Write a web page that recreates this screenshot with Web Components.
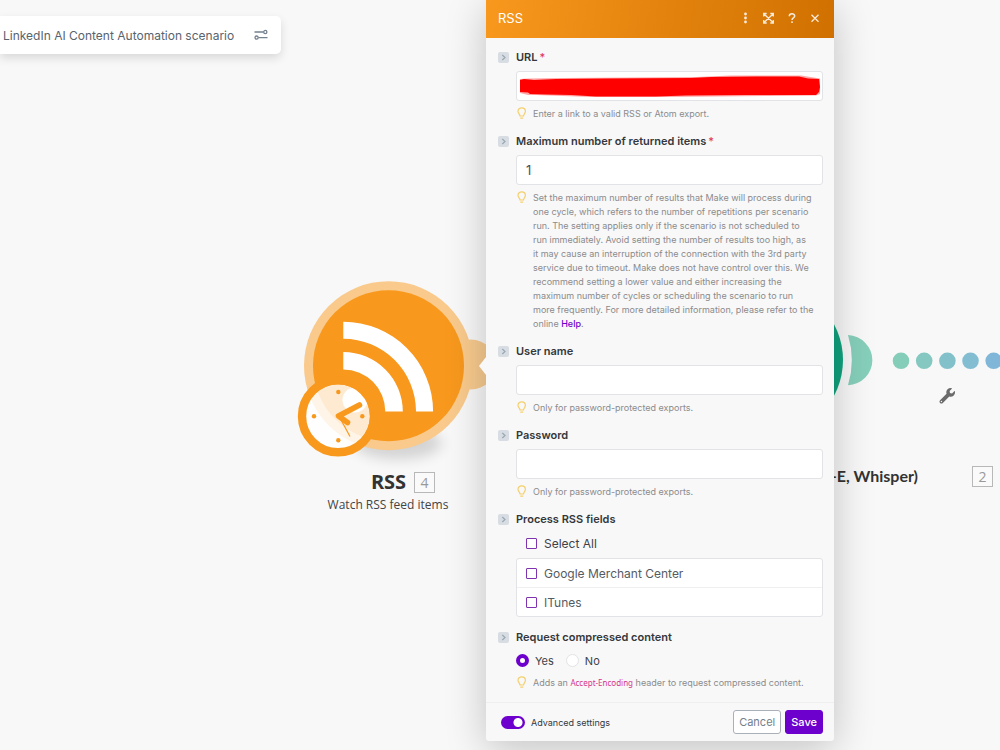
<!DOCTYPE html>
<html lang="en">
<head>
<meta charset="utf-8">
<title>LinkedIn AI Content Automation scenario</title>
<style>
  body {
    margin: 0;
    background: #f8f8f8;
    color: #34373b;
    font-family: Inter, "Liberation Sans", sans-serif;
  }
</style>
</head>
<body>
<scenario-canvas>
  <scenario-title>LinkedIn AI Content Automation scenario</scenario-title>

  <scenario-module style="left:278px;top:270px" label="RSS" number="4" text="Watch RSS feed items">
    <rss-icon></rss-icon>
  </scenario-module>
  <scenario-route style="left:680px;top:270px"></scenario-route>
  <module-caption style="right:82px;top:464px" narrow>-E, Whisper)</module-caption>
  <module-number style="left:972px;top:466px">2</module-number>

  <settings-panel style="left:486px;top:0" heading="RSS">
    <form-field label="URL" type="url" required>
      <redaction-mark slot="over"></redaction-mark>
      <span slot="hint">Enter a link to a valid RSS or Atom export.</span>
    </form-field>
    <form-field label="Maximum number of returned items" type="text" value="1" required>
      <span slot="hint">Set the maximum number of results that Make will process during<br>
        one cycle, which refers to the number of repetitions per scenario<br>
        run. The setting applies only if the scenario is not scheduled to<br>
        run immediately. Avoid setting the number of results too high, as<br>
        it may cause an interruption of the connection with the 3rd party<br>
        service due to timeout. Make does not have control over this. We<br>
        recommend setting a lower value and either increasing the<br>
        maximum number of cycles or scheduling the scenario to run<br>
        more frequently. For more detailed information, please refer to the<br>
        online <hint-link href="#help">Help</hint-link>.</span>
    </form-field>
    <form-field label="User name" type="text">
      <span slot="hint">Only for password-protected exports.</span>
    </form-field>
    <form-field label="Password" type="password">
      <span slot="hint">Only for password-protected exports.</span>
    </form-field>
    <form-field label="Process RSS fields">
      <check-list options="Google Merchant Center,ITunes"></check-list>
    </form-field>
    <form-field label="Request compressed content">
      <yes-no></yes-no>
      <span slot="hint">Adds an <hint-code>Accept-Encoding</hint-code> header to request compressed content.</span>
    </form-field>
    <panel-footer slot="footer"></panel-footer>
  </settings-panel>
</scenario-canvas>

<script>
// attaches an open root and fills it from a template
class Base extends HTMLElement {
  constructor() {
    super();
    this.attachShadow({ mode: 'open' });
  }
  connectedCallback() {
    const template = document.createElement('template');
    template.innerHTML = this.render();
    this.shadowRoot.replaceChildren(template.content.cloneNode(true));
  }
  attr(name) {
    return this.getAttribute(name) || '';
  }
}

class ScenarioCanvas extends Base {
  render() {
    return /*html*/ `
    <style>
    :host{
      display:block;
      position:relative;
      min-height:100vh;
      overflow:hidden;
    }
    </style>
    <slot></slot>`;
  }
}

class ScenarioTitle extends Base {
  render() {
    return /*html*/ `
    <style>
    :host{
      display:flex;
      align-items:center;
      gap:20px;
      width:fit-content;
      height:38px;
      box-sizing:border-box;
      margin-top:16px;
      padding:0 13px 0 3px;
      background:white;
      border-radius:0 5px 5px 0;
      box-shadow:0 4px 10px rgba(0,0,0,.13);
      font-size:12px;
      color:#59636d;
      position:absolute;
      left:0;
    }
    button{
      display:flex;
      padding:0;
      border:none;
      background:none;
    }
    </style>
    <slot></slot>
    <button aria-label="Scenario options">
      <svg width="14" height="12" viewBox="0 0 14 12" fill="none" stroke="#74818f" stroke-width="1.3">
        <path d="M.5 3H9.5M4.5 8.6H13.500"/>
        <circle cx="11.300" cy="3" r="1.600"/>
        <circle cx="2.600" cy="8.600" r="1.600"/>
      </svg>
    </button>`;
  }
}

class RssIcon extends Base {
  render() {
    return /*html*/ `
    <style>
    :host{display:block}
    svg{display:block}
    </style>
    <svg width="220" height="200" viewBox="278 270 220 200">
      <defs>
        <filter id="soft" x="-30%" y="-80%" width="160%" height="260%"><feGaussianBlur stdDeviation="7"/></filter>
      </defs>
      <ellipse cx="398" cy="443" rx="44" ry="16" fill="#000" opacity=".15" filter="url(#soft)"/>
      <circle cx="471" cy="364.500" r="25" fill="#f8cb8f"/>
      <circle cx="388.500" cy="365.700" r="84.500" fill="#f9ca8c"/>
      <circle cx="388.500" cy="365.700" r="75.500" fill="#f8981d"/>
      <g fill="#fff">
        <path d="M343.300 321.700A89.800 89.800 0 0 1 433.100 411.500H416A72.700 72.700 0 0 0 343.300 338.800Z"/>
        <path d="M343.300 352A59.500 59.500 0 0 1 402.800 411.500H385.300A42 42 0 0 0 343.300 369.500Z"/>
        <circle cx="355" cy="400" r="12.500"/>
      </g>
      <circle cx="338" cy="416.300" r="32" fill="#fff" opacity=".8"/>
      <circle cx="338" cy="416.300" r="36" fill="none" stroke="#f8981d" stroke-width="8.400"/>
      <g fill="#f8981d">
        <circle cx="338.300" cy="392" r="2.200"/><circle cx="314" cy="416.300" r="2.200"/>
        <circle cx="362.300" cy="416.300" r="2.200"/><circle cx="338.300" cy="440.300" r="2.200"/>
      </g>
      <path d="M359.500 405L338.500 416L347.500 422.500" fill="none" stroke="#f8981d" stroke-width="5.600" stroke-linecap="round" stroke-linejoin="round"/>
      <path d="M340 418L350 436.500" stroke="#f8981d" stroke-width="1.200"/>
    </svg>`;
  }
}

class ModuleCaption extends Base {
  render() {
    return /*html*/ `
    <style>
    :host{
      display:block;
      font:bold 20px/24px "Open Sans","Noto Sans",sans-serif;
      color:#333;
      white-space:nowrap;
    }
    :host([narrow]){
      position:absolute;
      font-family:Lato,"Open Sans",sans-serif;
      font-size:16px;
    }
    </style>
    <slot></slot>`;
  }
}

class ModuleNumber extends Base {
  render() {
    return /*html*/ `
    <style>
    :host{
      display:block;
      box-sizing:border-box;
      width:21px;
      height:21px;
      border:1px solid #b8b8b8;
      background:#fafafa;
      font:14px/19px "Open Sans","Noto Sans",sans-serif;
      text-align:center;
      color:#999;
    }
    :host([style]){position:absolute}
    </style>
    <slot></slot>`;
  }
}

class ScenarioModule extends Base {
  render() {
    return /*html*/ `
    <style>
    :host{
      display:block;
      position:absolute;
      width:220px;
    }
    .name{
      display:flex;
      justify-content:center;
      align-items:center;
      gap:8px;
      padding-left:30px;
    }
    p{
      margin:3px 0 0;
      font:12px/16px "Open Sans","Noto Sans",sans-serif;
      text-align:center;
      color:#444;
    }
    </style>
    <slot></slot>
    <div class="name">
      <module-caption>${this.attr('label')}</module-caption>
      <module-number>${this.attr('number')}</module-number>
    </div>
    <p>${this.attr('text')}</p>`;
  }
}

class ScenarioRoute extends Base {
  render() {
    return /*html*/ `
    <style>
    :host{
      display:block;
      position:absolute;
    }
    svg{display:block}
    </style>
    <svg width="330" height="200" viewBox="680 270 330 200">
      <circle cx="767.500" cy="360" r="75.500" fill="#10a37f"/>
      <path d="M848 335A26 25.200 0 0 1 848 385.300A86 86 0 0 0 848 335Z" fill="#86cfba"/>
      <circle cx="901" cy="360.800" r="8.300" fill="#84cdb9"/>
      <circle cx="924.200" cy="360.800" r="8.300" fill="#84c8c1"/>
      <circle cx="947.400" cy="360.800" r="8.300" fill="#83c1ca"/>
      <circle cx="970.500" cy="360.800" r="8.300" fill="#82bdd1"/>
      <circle cx="993.700" cy="360.800" r="8.300" fill="#80b6d8"/>
      <path transform="translate(939.500 388) scale(.0303)" fill="#6b6b6b" d="M507.730 109.100c-2.240-9.030-13.540-12.090-20.120-5.510l-74.360 74.360-67.880-11.310-11.310-67.880 74.360-74.360c6.620-6.620 3.430-17.900-5.660-20.160-47.380-11.740-99.550.910-136.580 37.930-39.640 39.640-50.550 97.100-34.050 147.200L18.740 402.760c-24.990 24.990-24.990 65.510 0 90.500 24.990 24.990 65.510 24.990 90.500 0l213.210-213.210c50.120 16.710 107.470 5.680 147.370-34.220 37.070-37.070 49.700-89.320 37.910-136.730zM64 472c-13.250 0-24-10.750-24-24 0-13.260 10.750-24 24-24s24 10.740 24 24c0 13.250-10.750 24-24 24z"/>
    </svg>`;
  }
}

class SettingsPanel extends Base {
  render() {
    return /*html*/ `
    <style>
    :host{
      display:block;
      position:absolute;
      width:348px;
      border-radius:3px;
      background:#f8f8f8;
      box-shadow:0 8px 40px rgba(0,0,0,.22);
    }
    /* pointer towards the edited module */
    :host::before{
      content:'';
      position:absolute;
      left:-7px;
      top:357px;
      border:solid transparent;
      border-width:9px 7px 9px 0;
      border-right-color:#f8f8f8;
    }
    header{
      display:flex;
      align-items:center;
      height:38px;
      box-sizing:border-box;
      padding:0 11px 3px 12px;
      background:linear-gradient(100deg,#f8981d,#d07000);
      color:white;
    }
    h1{
      flex:1;
      margin:0;
      font-size:13px;
      font-weight:400;
    }
    nav{
      display:flex;
      gap:7px;
      opacity:.85;
    }
    button{
      display:flex;
      padding:0;
      border:none;
      background:none;
    }
    .fields{
      display:flex;
      flex-direction:column;
      gap:12px;
      padding:11px 11px 12px 12px;
    }
    </style>
    <header>
      <h1>${this.attr('heading')}</h1>
      <nav>
        <button aria-label="More"><svg width="16" height="16" fill="#fff"><circle cx="7.500" cy="4" r="1.400"/><circle cx="7.500" cy="8" r="1.400"/><circle cx="7.500" cy="12" r="1.400"/></svg></button>
        <button aria-label="Expand"><svg width="16" height="16" fill="none" stroke="#fff" stroke-width="1.300"><path d="M2.700 6.500V3.500H5.700M9.300 3.500H12.300V6.500M12.300 10V13H9.300M5.700 13H2.700V10M3 4L12 12.500M12 4L3 12.500"/></svg></button>
        <button aria-label="Help"><svg width="16" height="16" fill="none" stroke="#fff" stroke-width="1.500"><path d="M5.300 6.200C5.300 2.900 10.700 2.900 10.700 6.100C10.700 8 8 7.900 8 10"/><path d="M8 11.200V13"/></svg></button>
        <button aria-label="Close"><svg width="16" height="16" fill="none" stroke="#fff" stroke-width="1.300"><path d="M4.500 4.800L11.500 11.800M11.500 4.800L4.500 11.800"/></svg></button>
      </nav>
    </header>
    <div class="fields"><slot></slot></div>
    <slot name="footer"></slot>`;
  }
}

class FormField extends Base {
  render() {
    const type = this.attr('type');
    const star = this.hasAttribute('required') ? '<b>*</b>' : '';
    const hint = this.querySelector('[slot=hint]');
    return /*html*/ `
    <style>
    :host{
      display:grid;
      grid-template-columns:11px 1fr;
      column-gap:7px;
      row-gap:6px;
    }
    .toggle{
      display:flex;
      align-self:center;
      padding:0;
      border:none;
      background:none;
    }
    .label{
      font-size:11px;
      line-height:16px;
      font-weight:600;
      color:#34373b;
    }
    b{
      margin-left:2px;
      font-weight:500;
      color:#e0335a;
    }
    .control{
      grid-column:2;
      position:relative;
    }
    input{
      display:block;
      box-sizing:border-box;
      width:100%;
      height:30px;
      padding:0 9px;
      border:1px solid #e2e3e6;
      border-radius:3px;
      background:white;
      font:13px Inter,"Liberation Sans",sans-serif;
      color:#4a525a;
    }
    .hint{
      grid-column:2;
      display:grid;
      grid-template-columns:11px 1fr;
      gap:6px;
      font-size:9px;
      line-height:14px;
      color:#8b8b8d;
      white-space:nowrap;
    }
    </style>
    <button class="toggle" aria-label="Collapse">
      <svg width="11" height="11"><rect width="11" height="11" rx="2" fill="#d7dde2"/><path d="M4.300 3L7 5.500L4.300 8" fill="none" stroke="#9aa7b3" stroke-width="1.200"/></svg>
    </button>
    ${type ? `<label class="label" for="in">${this.attr('label')}${star}</label>`
           : `<div class="label" id="name">${this.attr('label')}</div>`}
    ${type ? `<div class="control"><input id="in" type="${type}" value="${this.attr('value')}"><slot name="over"></slot></div>`
           : `<div class="control" role="group" aria-labelledby="name"><slot></slot></div>`}
    ${hint ? `<div class="hint">
      <svg width="11" height="13" fill="none" stroke="#f5cf6b" stroke-width="1.200"><path d="M4 9C4 7.300 2 6.500 2 4.300C2 2.200 3.700 .8 5.700 .8S9.400 2.200 9.400 4.300C9.400 6.500 7.500 7.300 7.500 9ZM4.300 11.200H7.200"/></svg>
      <slot name="hint"></slot></div>` : ''}`;
  }
}

class RedactionMark extends Base {
  render() {
    return /*html*/ `
    <style>
    :host{
      display:block;
      position:absolute;
      inset:0;
    }
    svg{display:block;width:100%;height:100%}
    </style>
    <svg viewBox="0 0 307 30" preserveAspectRatio="none">
      <path fill="#ff5050" opacity=".5" d="M4 8L12 7.500L45 7L180 6L215 4.500L285 4.500L304 7.500L304 23L300 24.500L250 25L150 26L75 26L20 24L12 24L4 22Z"/>
      <path fill="#fe0000" d="M4 9L8 8L18 9L40 8L90 7.500L175 7L195 6L240 5.500L283 5.500L292 7.500L303 8L304 16L303 21L300 24L230 24L170 24.500L140 25.500L80 25.500L55 24L30 23.500L14 23L12 21.500L4 21Z"/>
    </svg>`;
  }
}

class HintLink extends Base {
  render() {
    return /*html*/ `
    <style>
    a{color:#6d00cc;font-weight:500;text-decoration:none}
    </style>
    <a href="${this.attr('href')}"><slot></slot></a>`;
  }
}

class HintCode extends Base {
  render() {
    return /*html*/ `
    <style>
    code{font:8px "Noto Sans",sans-serif;color:#d6338c}
    </style>
    <code><slot></slot></code>`;
  }
}

class CheckList extends Base {
  render() {
    const row = (name) => `<label><input type="checkbox">${name}</label>`;
    return /*html*/ `
    <style>
    :host{
      display:block;
      font-size:12px;
      color:#555b63;
    }
    label{
      display:flex;
      align-items:center;
      gap:7px;
      height:28px;
      padding:0 9px;
    }
    input{
      appearance:none;
      box-sizing:border-box;
      width:11px;
      height:11px;
      margin:0;
      border:1px solid #8033b0;
      border-radius:1px;
      background:white;
    }
    .all label{
      height:20px;
      padding:0 10px;
      color:#3d4248;
    }
    .list{
      margin-top:5px;
      border:1px solid #e2e3e6;
      border-radius:3px;
      background:white;
    }
    .list label+label{border-top:1px solid #efeff1}
    </style>
    <div class="all">${row('Select All')}</div>
    <div class="list">${this.attr('options').split(',').map(row).join('')}</div>`;
  }
}

class YesNo extends Base {
  render() {
    return /*html*/ `
    <style>
    :host{
      display:flex;
      gap:12px;
      height:19px;
      font-size:11px;
      color:#3d4248;
    }
    label{
      display:flex;
      align-items:center;
      gap:6px;
    }
    input{
      appearance:none;
      box-sizing:border-box;
      width:13px;
      height:13px;
      margin:0;
      border:1px solid #e2e3e6;
      border-radius:50%;
      background:white;
    }
    input:checked{border:4px solid #6d00cc}
    </style>
    <label><input type="radio" name="compressed" checked>Yes</label>
    <label><input type="radio" name="compressed">No</label>`;
  }
}

class PanelFooter extends Base {
  render() {
    return /*html*/ `
    <style>
    :host{
      display:flex;
      align-items:center;
      gap:4px;
      padding:7px 11px 7px 15px;
      border-top:1px solid #efeff0;
    }
    label{
      display:flex;
      flex:1;
      align-items:center;
      gap:6px;
      font-size:9px;
      color:#34373b;
    }
    input{
      appearance:none;
      width:24px;
      height:13px;
      margin:0;
      border-radius:7px;
      background:radial-gradient(circle at 17px 50%,white 4px,#6d00cc 5px);
    }
    button{
      box-sizing:border-box;
      height:24px;
      padding:0 5px;
      border:1px solid #a9b0b8;
      border-radius:3px;
      background:white;
      font:11px Inter,"Liberation Sans",sans-serif;
      color:#74808c;
    }
    .save{
      border-color:#6d00cc;
      background:#6d00cc;
      color:white;
      font-weight:500;
    }
    </style>
    <label><input type="checkbox" role="switch" checked>Advanced settings</label>
    <button>Cancel</button>
    <button class="save">Save</button>`;
  }
}

window.customElements.define('scenario-canvas', ScenarioCanvas);
window.customElements.define('scenario-title', ScenarioTitle);
window.customElements.define('rss-icon', RssIcon);
window.customElements.define('module-caption', ModuleCaption);
window.customElements.define('module-number', ModuleNumber);
window.customElements.define('scenario-module', ScenarioModule);
window.customElements.define('scenario-route', ScenarioRoute);
window.customElements.define('settings-panel', SettingsPanel);
window.customElements.define('form-field', FormField);
window.customElements.define('redaction-mark', RedactionMark);
window.customElements.define('hint-link', HintLink);
window.customElements.define('hint-code', HintCode);
window.customElements.define('check-list', CheckList);
window.customElements.define('yes-no', YesNo);
window.customElements.define('panel-footer', PanelFooter);
</script>
</body>
</html>
